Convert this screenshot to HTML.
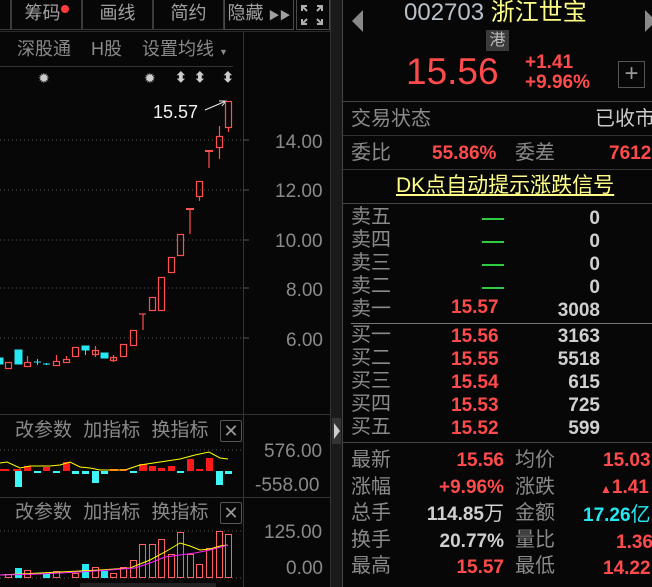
<!DOCTYPE html>
<html><head><meta charset="utf-8">
<style>
*{margin:0;padding:0;box-sizing:border-box}
body{width:652px;height:587px;background:#070707;overflow:hidden;position:relative;font-family:"Liberation Sans","Noto Sans CJK SC",sans-serif;color:#8c8c8c}
.a{position:absolute;white-space:nowrap;line-height:1}
.g{color:#8a8a8a}
.r{color:#ff4b4b;font-weight:bold}
.w{color:#d0d0d0;font-weight:bold}
.hl{position:absolute;height:1px;background:#3a3a3a}
.vl{position:absolute;width:1px;background:#3a3a3a}
.btn{position:absolute;top:0;height:30px;border:1px solid #3a3a3a;border-top:none;font-size:18px;color:#a0a0a0;text-align:center;line-height:27px}
</style></head><body>
<div class="btn" style="left:-2px;width:13px"></div>
<div class="btn" style="left:11px;width:71px">筹码<span style="display:inline-block;width:8px;height:8px;border-radius:4px;background:#ff3b3b;vertical-align:top;margin-top:5px"></span></div>
<div class="btn" style="left:82px;width:71px">画线</div>
<div class="btn" style="left:153px;width:71px">简约</div>
<div class="btn" style="left:224px;width:70px;border:1px solid #4a4a4a;border-top:none">隐藏 <span style="font-size:11px">▶▶</span></div>
<div class="btn" style="left:296px;width:34px;border:1px solid #4a4a4a;border-top:none"></div>
<svg class="a" style="left:300px;top:4px" width="24" height="22" stroke="#b0b0b0" stroke-width="2" fill="none"><path d="M2 7V2h5M2 2l5 5M22 7V2h-5M22 2l-5 5M2 15v5h5M2 20l5-5M22 15v5h-5M22 20l-5-5"/></svg>
<div class="hl" style="left:0;top:31px;width:330px;background:#2a2a2a"></div>
<div class="vl" style="left:243px;top:32px;height:555px;background:#333"></div>
<div class="vl" style="left:330px;top:0;height:587px;background:#333"></div>
<div class="a" style="left:331px;top:0;width:11px;height:587px;background:#1a1a1a"></div>
<div class="a" style="left:332px;top:418px;width:9px;height:26px;background:#333"></div>
<div class="a" style="left:334px;top:423px;width:0;height:0;border-left:6px solid #ccc;border-top:8px solid transparent;border-bottom:8px solid transparent"></div>
<div class="vl" style="left:342px;top:0;height:587px;background:#444"></div>

<div class="a g" style="left:17px;top:40px;font-size:18px">深股通</div>
<div class="a g" style="left:91px;top:40px;font-size:18px">H股</div>
<div class="a g" style="left:142px;top:40px;font-size:18px">设置均线 <span style="font-size:9px">▼</span></div>
<div class="hl" style="left:0;top:66px;width:233px;background:#333"></div>
<div class="a" style="left:38px;top:71px;font-size:14px;color:#ccc">✹</div>
<div class="a" style="left:144px;top:71px;font-size:14px;color:#ccc">✹</div>
<div class="a" style="left:175px;top:70px;font-size:14px;color:#ccc;font-weight:bold">⬍</div>
<div class="a" style="left:194px;top:70px;font-size:14px;color:#ccc;font-weight:bold">⬍</div>
<div class="a" style="left:222px;top:70px;font-size:14px;color:#ccc;font-weight:bold">⬍</div>
<div class="a" style="left:153px;top:103px;font-size:18px;color:#f0f0f0">15.57</div>

<svg class="a" style="left:0;top:0" width="330" height="587">
<g stroke="#555" stroke-dasharray="1,3">
<line x1="0" y1="140" x2="243" y2="140"/><line x1="0" y1="190" x2="243" y2="190"/><line x1="0" y1="240" x2="243" y2="240"/><line x1="0" y1="288" x2="243" y2="288"/><line x1="0" y1="338" x2="243" y2="338"/>
<line x1="0" y1="450" x2="243" y2="450"/><line x1="0" y1="531" x2="243" y2="531"/><line x1="0" y1="578" x2="243" y2="578"/>
</g>
<g stroke="#555"><line x1="243" y1="140" x2="249" y2="140"/><line x1="243" y1="190" x2="249" y2="190"/><line x1="243" y1="240" x2="249" y2="240"/><line x1="243" y1="288" x2="249" y2="288"/><line x1="243" y1="338" x2="249" y2="338"/></g>
<path d="M205 110l21-9M219 101l7 0-4 5" stroke="#eee" fill="none"/>
<g stroke="#ff5050" fill="none" stroke-width="1.2">
<rect x="5.5" y="362.5" width="6" height="6"/>
<rect x="24.5" y="362.5" width="6" height="4"/><line x1="27.5" y1="356" x2="27.5" y2="362"/>
<rect x="53.5" y="361.5" width="6" height="4"/><line x1="56.5" y1="355" x2="56.5" y2="361"/>
<rect x="63.5" y="359.5" width="6" height="3"/><line x1="66.5" y1="356" x2="66.5" y2="359"/>
<rect x="72.5" y="347.5" width="6" height="9"/>
<rect x="92.5" y="350.5" width="6" height="4"/><line x1="95.5" y1="346" x2="95.5" y2="357"/>
<rect x="110.5" y="357.5" width="6" height="3"/><line x1="113.5" y1="355" x2="113.5" y2="362"/>
<rect x="120.5" y="344.5" width="6" height="12"/>
<rect x="130.5" y="330.5" width="6" height="15"/>
<line x1="139" y1="314" x2="146" y2="314"/><line x1="143" y1="314" x2="143" y2="330"/>
<rect x="149.5" y="297.5" width="6" height="13"/>
<rect x="158.5" y="277.5" width="6" height="33"/>
<rect x="168.5" y="257.5" width="6" height="15"/>
<rect x="177.5" y="234.5" width="6" height="21"/>
<line x1="186" y1="209" x2="194" y2="209" stroke-width="2"/><line x1="190" y1="209" x2="190" y2="234"/>
<rect x="196.5" y="181.5" width="6" height="15"/><line x1="199.5" y1="197" x2="199.5" y2="201"/>
<line x1="205" y1="151" x2="213" y2="151" stroke-width="2"/><line x1="209" y1="151" x2="209" y2="168"/>
<rect x="216.5" y="136.5" width="6" height="11"/><line x1="219.5" y1="126" x2="219.5" y2="136"/><line x1="219.5" y1="148" x2="219.5" y2="159"/>
<rect x="225.5" y="101.5" width="6" height="26"/><line x1="228.5" y1="128" x2="228.5" y2="132"/>
</g>
<g fill="#27e8f2" stroke="#27e8f2">
<rect x="0" y="358" width="3" height="6"/>
<rect x="15" y="350" width="7" height="14"/>
<line x1="34" y1="362" x2="41" y2="362"/><line x1="37.5" y1="359" x2="37.5" y2="365"/>
<line x1="43" y1="364" x2="50" y2="364"/><line x1="46.5" y1="363" x2="46.5" y2="365"/>
<rect x="82" y="346" width="7" height="4"/><line x1="85.5" y1="350" x2="85.5" y2="355"/>
<rect x="101" y="353" width="7" height="5"/>
</g>
<g fill="#ff1a1a"><rect x="0" y="469" width="9" height="2"/><rect x="13" y="469" width="8" height="2"/><rect x="24" y="466" width="7" height="5"/><rect x="43" y="467" width="7" height="4"/><rect x="63" y="462" width="7" height="9"/><rect x="110" y="469" width="8" height="2"/><rect x="120" y="469" width="7" height="2"/><rect x="139" y="464" width="8" height="7"/><rect x="149" y="466" width="7" height="5"/><rect x="158" y="468" width="7" height="3"/><rect x="168" y="466" width="7" height="5"/><rect x="187" y="459" width="7" height="12"/><rect x="196" y="469" width="7" height="2"/><rect x="206" y="458" width="7" height="13"/></g>
<g fill="#3ff5f5"><rect x="15" y="471" width="7" height="16"/><rect x="34" y="471" width="7" height="2"/><rect x="53" y="471" width="7" height="2"/><rect x="72" y="471" width="7" height="3"/><rect x="82" y="471" width="7" height="3"/><rect x="92" y="471" width="7" height="12"/><rect x="101" y="471" width="7" height="3"/><rect x="130" y="471" width="7" height="2"/><rect x="177" y="471" width="7" height="2"/><rect x="216" y="471" width="7" height="14"/><rect x="225" y="471" width="7" height="3"/></g>
<polyline fill="none" stroke="#ffff00" points="0,463 7,462 20,468 30,466 50,466 60,465 70,462 80,467 90,468 100,470 110,470 125,470 140,465 160,462 180,459 195,455 209,452 220,458 228,459"/>
<g fill="#27e8f2"><rect x="15" y="568" width="7" height="10"/><rect x="43" y="574" width="7" height="4"/><rect x="82" y="564" width="7" height="14"/><rect x="101" y="571" width="7" height="7"/></g>
<g stroke="#ff6060" fill="none"><rect x="5.5" y="574.5" width="6" height="3"/><rect x="24.5" y="570.5" width="6" height="7"/><rect x="53.5" y="571.5" width="6" height="6"/><rect x="72.5" y="573.5" width="6" height="4"/><rect x="92.5" y="567.5" width="6" height="10"/><rect x="110.5" y="573.5" width="6" height="4"/><rect x="120.5" y="567.5" width="6" height="10"/><rect x="130.5" y="560.5" width="6" height="17"/><rect x="139.5" y="544.5" width="6" height="33"/><rect x="149.5" y="544.5" width="6" height="33"/><rect x="158.5" y="539.5" width="6" height="38"/><rect x="168.5" y="554.5" width="6" height="23"/><rect x="177.5" y="532.5" width="6" height="45"/><rect x="187.5" y="554.5" width="6" height="23"/><rect x="196.5" y="564.5" width="6" height="13"/><rect x="206.5" y="548.5" width="6" height="29"/><rect x="216.5" y="531.5" width="6" height="46"/><rect x="225.5" y="534.5" width="6" height="43"/></g>
<polyline fill="none" stroke="#ffff00" points="0,575 40,573 60,572 100,570 130,568 150,560 165,552 180,543 190,546 200,550 210,549 220,546 228,545"/>
<polyline fill="none" stroke="#ff22ff" points="0,575 40,574 80,572 110,570 135,568 150,563 165,557 180,555 195,553 210,550 228,545"/>
</svg>

<div class="a g" style="left:275px;top:133px;font-size:19px">14.00</div>
<div class="a g" style="left:275px;top:182px;font-size:19px">12.00</div>
<div class="a g" style="left:275px;top:232px;font-size:19px">10.00</div>
<div class="a g" style="left:286px;top:281px;font-size:19px">8.00</div>
<div class="a g" style="left:286px;top:331px;font-size:19px">6.00</div>

<div class="hl" style="left:0;top:414px;width:330px;background:#333"></div>
<div class="a g" style="left:15px;top:421px;font-size:19px;word-spacing:6px">改参数 加指标 换指标</div>
<div class="a" style="left:220px;top:420px;width:22px;height:22px;border:1px solid #555;border-radius:2px;color:#999;font-size:18px;text-align:center;line-height:20px">✕</div>
<div class="a g" style="left:264px;top:442px;font-size:19px">576.00</div>
<div class="a g" style="left:255px;top:476px;font-size:19px">-558.00</div>
<div class="hl" style="left:0;top:497px;width:330px;background:#333"></div>
<div class="a g" style="left:15px;top:503px;font-size:19px;word-spacing:6px">改参数 加指标 换指标</div>
<div class="a" style="left:220px;top:502px;width:22px;height:22px;border:1px solid #555;border-radius:2px;color:#999;font-size:18px;text-align:center;line-height:20px">✕</div>
<div class="a g" style="left:264px;top:523px;font-size:19px">125.00</div>
<div class="a g" style="left:286px;top:559px;font-size:19px">0.00</div>
<div class="a" style="left:80px;top:583px;width:136px;height:4px;background:#222"></div>

<div class="a" style="left:352px;top:10px;width:0;height:0;border-right:11px solid #888;border-top:11px solid transparent;border-bottom:11px solid transparent"></div>
<div class="a" style="left:645px;top:10px;width:0;height:0;border-left:11px solid #888;border-top:11px solid transparent;border-bottom:11px solid transparent"></div>
<div class="a" style="left:404px;top:1px;font-size:24px;color:#b8c0c8">002703 <span style="color:#ffff88">浙江世宝</span></div>
<div class="a" style="left:486px;top:30px;width:23px;height:21px;background:#3a3a3a;color:#bbb;font-size:16px;text-align:center;line-height:21px">港</div>
<div class="a" style="left:406px;top:53px;font-size:37px;color:#ff4b4b">15.56</div>
<div class="a r" style="left:525px;top:53px;font-size:19px">+1.41</div>
<div class="a r" style="left:525px;top:73px;font-size:19px">+9.96%</div>
<div class="a" style="left:618px;top:61px;width:27px;height:27px;border:1px solid #555;color:#999;font-size:24px;text-align:center;line-height:24px">+</div>
<div class="hl" style="left:343px;top:101px;width:309px;background:#444"></div>
<div class="a g" style="left:351px;top:109px;font-size:20px">交易状态</div>
<div class="a" style="left:595px;top:109px;font-size:20px;color:#ccc">已收市</div>
<div class="hl" style="left:343px;top:135px;width:309px;background:#333"></div>
<div class="a g" style="left:351px;top:143px;font-size:20px">委比</div>
<div class="a r" style="left:432px;top:144px;font-size:19px">55.86%</div>
<div class="a g" style="left:515px;top:143px;font-size:20px">委差</div>
<div class="a r" style="left:609px;top:144px;font-size:19px">7612</div>
<div class="hl" style="left:343px;top:169px;width:309px;background:#333"></div>
<div class="a" style="left:396px;top:175px;font-size:21px;color:#ffff88;text-decoration:underline">DK点自动提示涨跌信号</div>
<div class="hl" style="left:343px;top:203px;width:309px;background:#444"></div>

<div class="a g" style="left:351px;top:206px;font-size:20px;line-height:23px">卖五<br>卖四<br>卖三<br>卖二<br>卖一</div>
<div class="a" style="left:482px;top:218px;width:22px;height:2px;background:#2ecc40"></div>
<div class="a" style="left:482px;top:241px;width:22px;height:2px;background:#2ecc40"></div>
<div class="a" style="left:482px;top:264px;width:22px;height:2px;background:#2ecc40"></div>
<div class="a" style="left:482px;top:287px;width:22px;height:2px;background:#2ecc40"></div>
<div class="a r" style="left:451px;top:298px;font-size:19px">15.57</div>
<div class="a w" style="left:530px;top:207px;width:70px;text-align:right;font-size:19px;line-height:23px">0<br>0<br>0<br>0<br>3008</div>
<div class="hl" style="left:351px;top:323px;width:301px;background:#777"></div>
<div class="a g" style="left:351px;top:324px;font-size:20px;line-height:23px">买一<br>买二<br>买三<br>买四<br>买五</div>
<div class="a r" style="left:451px;top:325px;font-size:19px;line-height:23px">15.56<br>15.55<br>15.54<br>15.53<br>15.52</div>
<div class="a w" style="left:530px;top:325px;width:70px;text-align:right;font-size:19px;line-height:23px">3163<br>5518<br>615<br>725<br>599</div>
<div class="hl" style="left:343px;top:442px;width:309px;background:#444"></div>

<div class="a g" style="left:351px;top:447px;font-size:20px;line-height:26.5px">最新<br>涨幅<br>总手<br>换手<br>最高</div>
<div class="a g" style="left:515px;top:447px;font-size:20px;line-height:26.5px">均价<br>涨跌<br>金额<br>量比<br>最低</div>
<div class="a" style="left:330px;top:448px;width:174px;text-align:right;font-size:19px;line-height:26.5px;font-weight:bold"><span style="color:#ff4b4b">15.56</span><br><span style="color:#ff4b4b">+9.96%</span><br><span style="color:#d0d0d0">114.85<span style="font-weight:normal;font-size:20px">万</span></span><br><span style="color:#d0d0d0">20.77%</span><br><span style="color:#ff4b4b">15.57</span></div>
<div class="a" style="left:603px;top:448px;font-size:19px;line-height:26.5px;font-weight:bold"><span style="color:#ff4b4b">15.03</span><br><span style="color:#ff4b4b;margin-left:-3px"><span style="font-size:12px">▲</span>1.41</span><br><span style="color:#27e8f2;margin-left:-20px">17.26<span style="font-weight:normal;font-size:20px">亿</span></span><br><span style="color:#ff4b4b;margin-left:13px">1.36</span><br><span style="color:#ff4b4b">14.22</span></div>
</body></html>
